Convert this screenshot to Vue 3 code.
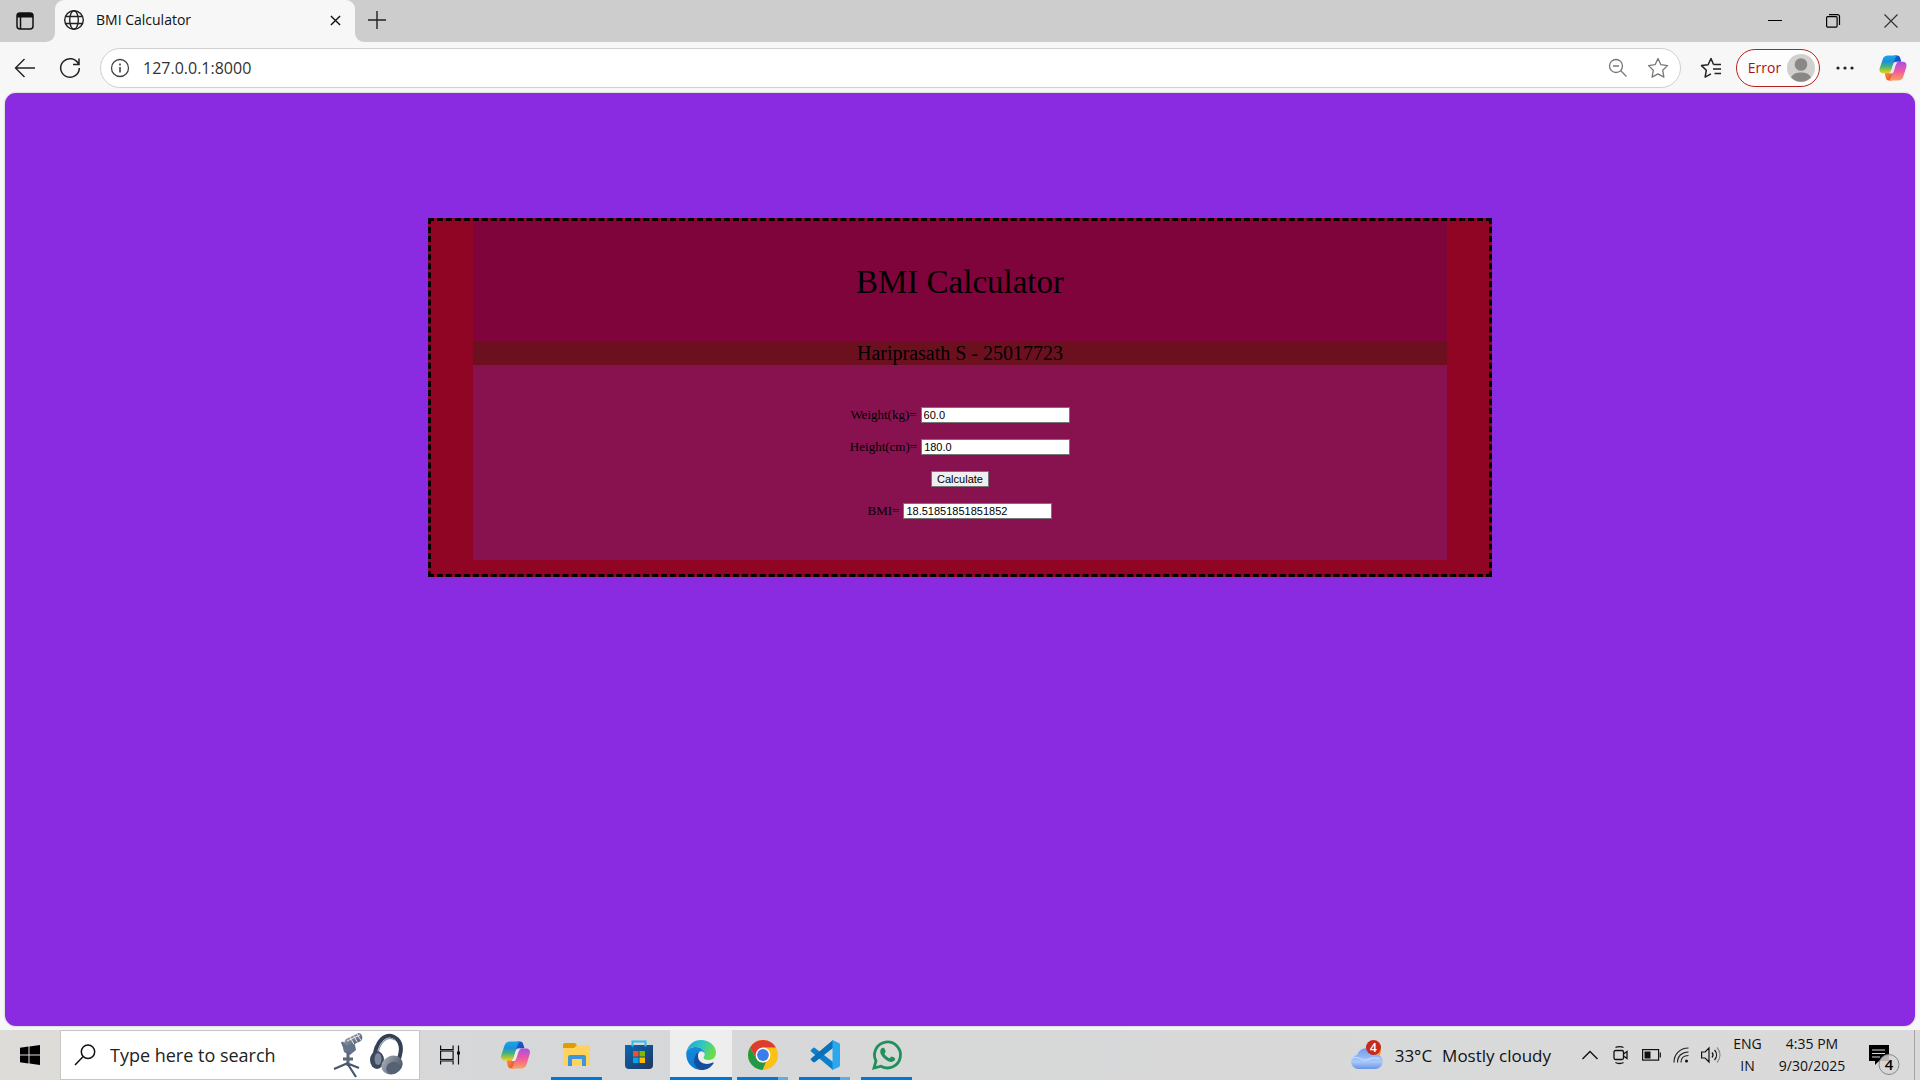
<script setup>
import { ref } from 'vue'

const address = ref('127.0.0.1:8000')
const weight = ref('60.0')
const height = ref('180.0')
const bmi = ref('18.51851851851852')

function calculate() {
  const metres = Number(height.value) / 100
  bmi.value = String(Number(weight.value) / (metres * metres))
}
</script>

<template>
  <div class="desktop">
    <svg class="defs" width="0" height="0" aria-hidden="true">
      <defs>
        <linearGradient id="cpA" x1="0" y1="0" x2="0" y2="1">
          <stop offset="0" stop-color="#19a5ea" /><stop offset=".35" stop-color="#1b8fdc" />
          <stop offset=".65" stop-color="#4bb86f" /><stop offset="1" stop-color="#f5cf15" />
        </linearGradient>
        <linearGradient id="cpB" x1="0" y1="0" x2="0" y2="1">
          <stop offset="0" stop-color="#a64fe6" /><stop offset=".5" stop-color="#ee5aa0" />
          <stop offset="1" stop-color="#fba05c" />
        </linearGradient>
        <linearGradient id="cpC" x1="0" y1="0" x2="1" y2="1">
          <stop offset="0" stop-color="#1a5fdc" /><stop offset="1" stop-color="#1646b8" />
        </linearGradient>
        <linearGradient id="cpD" x1="0" y1="0" x2="1" y2="1">
          <stop offset="0" stop-color="#f9a03c" /><stop offset="1" stop-color="#e8432e" />
        </linearGradient>
        <symbol id="copilot" viewBox="0 0 30 30">
          <path d="M16 1.500h3.500c2 0 2.800 1.300 3.300 3l1.100 3.700h-5.400c-2 0-3.200 1.200-3.800 3z" fill="url(#cpC)" />
          <path d="M14 28.500h-3.500c-2 0-2.800-1.300-3.300-3L6 20h5.500c2 0 3.200-1.200 3.800-3z" fill="url(#cpD)" />
          <path d="M9.500 1.500H20c-2 .7-2.600 2.500-3.200 4.500l-3.300 10.500c-.8 2.400-2 4-4.500 4H4.500c-3.200 0-4.700-2.400-3.700-5.600L4 5.500c.9-2.700 2.600-4 5.500-4z" fill="url(#cpA)" />
          <path d="M20.500 28.500H10c2-.7 2.600-2.500 3.200-4.500l3.300-11.500c.8-2.600 2-4.100 4.500-4.100h4.500c3.200 0 4.700 2.400 3.700 5.700L26 24.500c-.9 2.700-2.600 4-5.500 4z" fill="url(#cpB)" />
          <path d="M17.300 9.200h3.300c-1.800.5-2.500 2-3.200 4.200l-1.500 5c-.5 1.600-1.500 2.600-3.500 2.600H10c2-.5 2.900-2 3.500-4.300l1.500-5c.4-1.400 1-2.200 2.300-2.500z" fill="#eee9f1" />
        </symbol>
        <linearGradient id="edA" x1="0" y1="0" x2="1" y2=".4">
          <stop offset="0" stop-color="#229fe0" /><stop offset=".5" stop-color="#2cc5c5" /><stop offset="1" stop-color="#69dd4b" />
        </linearGradient>
        <linearGradient id="edB" x1="0" y1="0" x2="0" y2="1">
          <stop offset="0" stop-color="#168bd8" /><stop offset="1" stop-color="#0c77d2" />
        </linearGradient>
        <linearGradient id="store" x1="0" y1="0" x2="1" y2="1">
          <stop offset="0" stop-color="#0669b7" /><stop offset="1" stop-color="#22345c" />
        </linearGradient>
        <linearGradient id="cloud" x1="0" y1="0" x2="0" y2="1">
          <stop offset="0" stop-color="#6b9cf0" /><stop offset=".65" stop-color="#a9c9f8" /><stop offset="1" stop-color="#6794e8" />
        </linearGradient>
        <linearGradient id="metal" x1="0" y1="0" x2="1" y2="1">
          <stop offset="0" stop-color="#b2b8c3" /><stop offset="1" stop-color="#3b4759" />
        </linearGradient>
      </defs>
    </svg>

    <header class="tabstrip">
      <button class="tabactions" aria-label="Tab actions menu">
        <svg width="20" height="20" viewBox="0 0 20 20" fill="none" stroke="#111" stroke-width="1.500">
          <rect x="2" y="2" width="16" height="16" rx="3" /><path d="M2 5h16M2 3.500h16" stroke-width="3" /><path d="M5.500 6v12" />
        </svg>
      </button>
      <div class="tab">
        <svg width="22" height="22" viewBox="0 0 22 22" fill="none" stroke="#222" stroke-width="1.400">
          <circle cx="11" cy="11" r="9.300" /><ellipse cx="11" cy="11" rx="4.300" ry="9.300" /><path d="M2.500 7.500h17M2.500 14.500h17" />
        </svg>
        <span class="tabtitle">BMI Calculator</span>
        <button class="tabclose" aria-label="Close tab">
          <svg width="11" height="11" viewBox="0 0 12 12" stroke="#111" stroke-width="1.500"><path d="M1 1l10 10M11 1L1 11" /></svg>
        </button>
      </div>
      <button class="newtab" aria-label="New tab">
        <svg width="18" height="18" viewBox="0 0 18 18" stroke="#222" stroke-width="1.400"><path d="M9 0v18M0 9h18" /></svg>
      </button>
      <div class="winbuttons">
        <button aria-label="Minimize"><svg width="14" height="14" viewBox="0 0 14 14" stroke="#000"><path d="M0 6.500h14" /></svg></button>
        <button aria-label="Restore"><svg width="14" height="14" viewBox="0 0 14 14" fill="none" stroke="#000" stroke-width="1.200"><rect x=".6" y="2.600" width="10.500" height="10.500" rx="1" /><path d="M3 .6h8.500a2 2 0 0 1 2 2V11" /></svg></button>
        <button aria-label="Close"><svg width="14" height="14" viewBox="0 0 14 14" stroke="#333" stroke-width="1.200"><path d="M.5.5l13 13M13.500.5l-13 13" /></svg></button>
      </div>
    </header>

    <nav class="toolbar">
      <button class="navbtn" aria-label="Back">
        <svg width="22" height="20" viewBox="0 0 22 20" fill="none" stroke="#222" stroke-width="1.400"><path d="M10.500 1L1.500 10l9 9M1.500 10H21" /></svg>
      </button>
      <button class="navbtn" aria-label="Refresh">
        <svg width="22" height="22" viewBox="0 0 22 22" fill="none" stroke="#222" stroke-width="1.500"><path d="M19.500 7.200A9.300 9.300 0 1 0 20.300 11M20 1.500v6h-6" /></svg>
      </button>
      <div class="omnibox">
        <svg width="20" height="20" viewBox="0 0 20 20" fill="none" stroke="#444" stroke-width="1.300"><circle cx="10" cy="10" r="8.500" /><path d="M10 9v5.500M10 5.500v2" stroke-width="1.600" /></svg>
        <input v-model="address" class="address" aria-label="Address and search bar" />
        <button aria-label="Zoom"><svg width="20" height="20" viewBox="0 0 20 20" fill="none" stroke="#777" stroke-width="1.300"><circle cx="8" cy="8" r="6.500" /><path d="M5 8h6M12.800 12.800L18.500 18.500" /></svg></button>
        <button aria-label="Add to favorites"><svg width="22" height="22" viewBox="0 0 22 22" fill="none" stroke="#777" stroke-width="1.300" stroke-linejoin="round"><path d="M11 1.500l2.900 6.200 6.600.9-4.800 4.700 1.200 6.800L11 16.900l-5.900 3.200 1.200-6.800L1.500 8.600l6.600-.9z" /></svg></button>
      </div>
      <button class="favorites" aria-label="Favorites">
        <svg width="22" height="22" viewBox="0 0 22 22" fill="none" stroke="#222" stroke-width="1.500" stroke-linejoin="round"><path d="M13.500 7.500L11 1.500 8.100 7.700l-6.600.9 4.800 4.700-1.200 6.800L11 16.900M13.500 7.500H21M13 12h8M14.500 16.500H21" /></svg>
      </button>
      <button class="profile">
        Error
        <svg width="28" height="28" viewBox="0 0 28 28"><circle cx="14" cy="14" r="14" fill="#d2d0ce" /><circle cx="14" cy="10.500" r="6.300" fill="#8a8886" /><path d="M4 23.500c2-4 5.500-5 10-5s8 1 10 5a14 14 0 0 1-20 0z" fill="#8a8886" /></svg>
      </button>
      <button class="more" aria-label="Settings and more">
        <svg width="18" height="4" viewBox="0 0 18 4" fill="#222"><circle cx="2" cy="2" r="1.600" /><circle cx="9" cy="2" r="1.600" /><circle cx="16" cy="2" r="1.600" /></svg>
      </button>
      <button class="sidebar" aria-label="Copilot"><svg width="28" height="28"><use href="#copilot" /></svg></button>
    </nav>

    <main class="page">
      <div class="box">
        <h1>BMI Calculator</h1>
        <h2>Hariprasath S - 25017723</h2>
        <form @submit.prevent="calculate">
          <div class="row"><label for="weight">Weight(kg)=</label><input id="weight" v-model="weight" /></div>
          <div class="row"><label for="height">Height(cm)=</label><input id="height" v-model="height" /></div>
          <div class="row"><button type="submit">Calculate</button></div>
          <div class="row"><label for="bmi">BMI=</label><input id="bmi" v-model="bmi" readonly /></div>
        </form>
      </div>
    </main>

    <footer class="taskbar">
      <button class="start" aria-label="Start">
        <svg width="20" height="20" viewBox="0 0 20 20"><path d="M0 2.800l8.500-1.200V9.500H0zM9.500 1.500L20 0v9.500H9.500zM0 10.500h8.500v7.900L0 17.200zM9.500 10.500H20V20L9.500 18.500z" /></svg>
      </button>
      <label class="search">
        <svg width="22" height="22" viewBox="0 0 22 22" fill="none" stroke="#111" stroke-width="1.500"><circle cx="14" cy="7.700" r="6.700" /><path d="M9.200 12.500L1 21" /></svg>
        <input type="text" placeholder="Type here to search" aria-label="Type here to search" />
        <svg class="gear" width="70" height="46" viewBox="0 0 70 46">
          <path d="M10 12l3 7h6M13 18l-4-8" fill="none" stroke="#5d6878" stroke-width="2.500" />
          <path d="M9 11l12-3 2 10-6 5-6-3z" fill="#64748b" />
          <path d="M13 7L25 1.200c4-1 6 6 2.500 8L16 14.500c-4 .5-6-5-3-7.500z" fill="url(#metal)" />
          <path d="M17 5l4 7.500M20.500 3.500l4 7M24 2l4 6.500M14 9l13-6" stroke="#e5e8ec" fill="none" />
          <path d="M15 20v14M10 27h10" stroke="#5a6779" stroke-width="3" />
          <path d="M15 31L1 37M14 31l9 14M16 32l10 4" stroke="#46566c" stroke-width="2.200" />
          <path d="M41 29C42 8 54-2 64 7c6 6 4 14 1 23" fill="none" stroke="#344153" stroke-width="4" />
          <path d="M45 21C47 10 55 3 62 8" fill="none" stroke="#8b97a8" stroke-width="1.200" />
          <ellipse cx="44" cy="28" rx="7" ry="9" fill="#3c495c" /><ellipse cx="45" cy="27" rx="3.500" ry="6" fill="#7d899a" />
          <ellipse cx="59" cy="33" rx="11" ry="9" transform="rotate(-24 59 33)" fill="url(#metal)" />
          <ellipse cx="60" cy="36" rx="7" ry="6" transform="rotate(-24 60 36)" fill="#566174" />
        </svg>
      </label>
      <div class="apps">
        <button class="app" aria-label="Task View">
          <svg width="20" height="20" viewBox="0 0 20 20" fill="none" stroke="#111" stroke-width="1.200"><path d="M.6.500v4h12.500v-4M.6 19.500v-3.500h12.500v3.500M18.500.5v19" /><rect x=".6" y="6" width="12.500" height="8.500" /><path d="M17 6.500h3v3h-3z" fill="#111" stroke="none" /></svg>
        </button>
        <button class="app" aria-label="Copilot"><svg width="31" height="30"><use href="#copilot" /></svg></button>
        <button class="app open" aria-label="File Explorer">
          <svg width="28" height="26" viewBox="0 0 28 26"><path d="M0 3a2 2 0 0 1 2-2h10l2 2-2 5H0z" fill="#e09c05" /><path d="M0 6h11l3-3h12a1 1 0 0 1 1 1v18a1 1 0 0 1-1 1H1a1 1 0 0 1-1-1z" fill="#ffd25d" /><path d="M5 24V15a2 2 0 0 1 2-2h14a2 2 0 0 1 2 2v9h-4v-7H9v7z" fill="#3c96db" /></svg>
        </button>
        <button class="app" aria-label="Microsoft Store">
          <svg width="30" height="30" viewBox="0 0 30 30"><path d="M8.500 6V1.500h13V6" fill="none" stroke="#28c0ef" stroke-width="2" /><path d="M1 5h28v20a4 4 0 0 1-4 4H5a4 4 0 0 1-4-4z" fill="url(#store)" /><path d="M8.500 5v1.500M21.500 5v1.500" stroke="#28c0ef" stroke-width="2" /><path d="M9 11h5.500v5.500H9z" fill="#f25022" /><path d="M15.500 11H21v5.500h-5.500z" fill="#7fba00" /><path d="M9 17.500h5.500V23H9z" fill="#00a4ef" /><path d="M15.500 17.500H21V23h-5.500z" fill="#ffb900" /></svg>
        </button>
        <button class="app active" aria-label="Microsoft Edge">
          <svg width="30" height="30" viewBox="0 0 30 30"><path d="M.5 12C2 4.500 8 0 15 0c8.500 0 15 6 15 12.500 0 5-3.700 7.500-7.500 7.500-3.500 0-5-1.300-5-2.200 0-.8 1.200-1.300 1.200-3.800C18.700 10 14.500 7 10 7 5.500 7 2 9 .5 12z" fill="url(#edA)" /><path d="M.3 12C2 8.500 6 7 10 7c5 0 8.700 3.500 8.700 6.500-1-2-3-2.500-4.500-2C9 13 9 27 19 29.400 9.500 32-1 24.500.3 12z" fill="url(#edB)" /><path d="M13.300 12C8 13 4.500 26.500 15 29.900c5.500.3 10-2.400 12.500-6.400.5-.8-.1-1.300-.8-.9-6 3-14.700.8-14.700-6.600 0-1.600.4-3 1.300-4z" fill="#14509e" /></svg>
        </button>
        <button class="app open multi" aria-label="Google Chrome">
          <svg width="30" height="30" viewBox="0 0 30 30"><circle cx="15" cy="15" r="15" fill="#fbc116" /><path d="M2 7.500A15 15 0 0 1 28 7.500H15L8.500 18.700z" fill="#df3c30" /><path d="M2 7.500l6.500 11.200c2 3.500 6 4.800 9.500 3.300L14.500 30A15 15 0 0 1 2 7.500z" fill="#219a48" /><circle cx="15" cy="15" r="7.400" fill="#fff" /><circle cx="15" cy="15" r="5.900" fill="#397ee9" /></svg>
        </button>
        <button class="app open multi" aria-label="Visual Studio Code">
          <svg width="30" height="30" viewBox="0 0 30 30"><path d="M1 10l2-2a1.500 1.500 0 0 1 2 0l18 14v8L1 11.500A1 1 0 0 1 1 10z" fill="#0d80cc" /><path d="M1 20l2 2a1.500 1.500 0 0 0 2 0l18-14V0L1 18.500A1 1 0 0 0 1 20z" fill="#0871b8" /><path d="M22.500 0L29 3a2 2 0 0 1 1 1.800v20.400a2 2 0 0 1-1 1.800l-6.500 3z" fill="#29a8f0" /></svg>
        </button>
        <button class="app open" aria-label="WhatsApp">
          <svg width="30" height="30" viewBox="0 0 30 30"><path d="M2 28l2-7A13 13 0 1 1 9 26.200z" fill="none" stroke="#21905a" stroke-width="2.800" /><path d="M10 8c1-.6 2.200-.3 2.600.8l1 2.500c.3.800-1.200 2-1.100 2.500 1 2 2.500 3.500 4.700 4.400.8.200 1.800-2 2.700-1.700l2.600 1.300c1.100.6.7 2.100-.2 3-1.700 1.600-4 1.500-7-.1-3-1.700-5.200-4-6.500-6.600C7.600 11.500 8.300 9 10 8z" fill="#21905a" /></svg>
        </button>
      </div>
      <button class="weather">
        <svg width="32" height="32" viewBox="0 0 32 32"><circle cx="22" cy="12" r="8" fill="#f59a24" /><path d="M7 30a7 7 0 0 1-1-13.900A10 10 0 0 1 24.500 15 7.500 7.500 0 0 1 24 30z" fill="url(#cloud)" /><path d="M1 19c7-3 9 3 14 2s7-4 14-1" fill="none" stroke="#c4d9fa" stroke-width="1.200" /><circle cx="22.500" cy="8.500" r="7.500" fill="#c42b1c" /><text x="22.500" y="13" text-anchor="middle" class="badgetext" fill="#fff">4</text></svg>
        <span>33°C</span><span>Mostly cloudy</span>
      </button>
      <div class="tray">
        <button class="chevron" aria-label="Show hidden icons"><svg width="16" height="10" viewBox="0 0 16 10" fill="none" stroke="#111" stroke-width="1.400"><path d="M.5 9L8 1.500 15.500 9" /></svg></button>
        <button aria-label="Meet Now"><svg width="16" height="20" viewBox="0 0 16 20" fill="none" stroke="#111" stroke-width="1.300"><rect x="1" y="5.500" width="9.500" height="9" rx="1.500" /><path d="M10.500 9l3.500-2.500v7L10.500 11M2.500 2.500c2-1.300 6-1.300 8 0M2.500 17.500c2 1.300 6 1.300 8 0" /></svg></button>
        <button aria-label="Battery"><svg width="19" height="12" viewBox="0 0 19 12" fill="none" stroke="#111" stroke-width="1.200"><rect x=".6" y=".6" width="16" height="10.500" /><path d="M2.500 2.500h6v7h-6z" fill="#111" stroke="none" /><path d="M18.300 3.500v5" /></svg></button>
        <button aria-label="Wi-Fi"><svg width="16" height="16" viewBox="0 0 16 16" fill="none" stroke="#222" stroke-width="1.200"><path d="M1 15.500C1 7 7 1 15.500 1M4.500 15.500C4.500 9 9 5 15.500 5M8 15.500C8 11 11 8.500 15.500 8.500" /><circle cx="13.500" cy="14" r="1.500" fill="#111" stroke="none" /></svg></button>
        <button aria-label="Volume"><svg width="20" height="18" viewBox="0 0 20 18" fill="none" stroke="#111" stroke-width="1.200"><path d="M.6 6h3.500L8 2v14l-3.900-4H.6zM11 6.500c1.300 1.500 1.300 3.500 0 5M13.500 4c2.700 3 2.700 7 0 10" /><path d="M16 1.500c4 4.500 4 10.500 0 15" stroke="#888" /></svg></button>
        <button class="lang"><span>ENG</span><span>IN</span></button>
        <button class="clock"><span>4:35 PM</span><span>9/30/2025</span></button>
        <button class="notify" aria-label="Notifications">
          <svg width="32" height="32" viewBox="0 0 32 32"><path d="M1 1h20v16H11l-4 4v-4H1z" /><path d="M4 6h13M4 9.500h13M4 13h8" stroke="#dadada" stroke-width="1.200" /><circle cx="21" cy="20.500" r="10" fill="#d5d5d5" fill-opacity=".85" stroke="#888" /><text x="21" y="26" text-anchor="middle" class="notetext">4</text></svg>
        </button>
        <button class="showdesktop" aria-label="Show desktop"></button>
      </div>
    </footer>
  </div>
</template>

<style>
body { margin: 0; }
</style>

<style scoped>
* { box-sizing: border-box; }
.defs { position: absolute; }
svg { display: block; flex-shrink: 0; overflow: visible; }
button { border: 0; padding: 0; margin: 0; background: none; color: inherit; font: inherit; display: flex; align-items: center; justify-content: center; flex-shrink: 0; }
.desktop { min-height: 100vh; display: flex; flex-direction: column; background: #f7f7f7; font-family: "Open Sans", "Noto Sans", sans-serif; color: #111; }

.tabstrip { display: flex; height: 42px; background: linear-gradient(90deg, #f7f7f7 400px, #cdcdcd 400px); }
.tabactions { width: 55px; padding-right: 5px; border-bottom-right-radius: 9px; background: #cdcdcd; }
.tab { width: 300px; display: flex; align-items: center; padding: 0 14px 2px 8px; background: #f7f7f7; border-radius: 9px 9px 0 0; box-shadow: 0 -9px 0 9px #cdcdcd; clip-path: inset(0); }
.tabtitle { flex: 1; margin-left: 11px; font-size: 14px; line-height: 20px; }
.newtab { width: 44px; padding-bottom: 3px; background: #cdcdcd; border-bottom-left-radius: 9px; }
.winbuttons { flex: 1; display: flex; justify-content: flex-end; background: #cdcdcd; }
.winbuttons button { width: 58px; }

.toolbar { display: flex; align-items: center; height: 51px; padding: 0 3px 0 2px; }
.navbtn { width: 45px; }
.omnibox { flex: 1; display: flex; align-items: center; height: 40px; margin-left: 8px; padding: 0 10px 0 9px; border: 1px solid #cfcfcf; border-radius: 20px; background: #fff; }
.omnibox button { width: 40px; }
.omnibox button:last-child { width: 24px; margin-left: 8px; }
.address { flex: 1; min-width: 0; padding: 0; margin-left: 13px; border: 0; outline: 0; font: 16px/24px "Open Sans", "Noto Sans", sans-serif; color: #333; background: none; }
.favorites { width: 55px; padding-left: 5px; }
.profile { width: 84px; height: 38px; gap: 6px; padding-left: 7px; border: 1px solid #b8211d; border-radius: 19px; background: #fdfdfd; color: #b01010; font-size: 14px; }
.more { width: 49px; }
.sidebar { width: 48px; }

.page { flex: 1; margin: 0 5px 4px; padding-top: 125px; background: #8a2be2; border-radius: 11px; box-shadow: 0 0 2px #aaa; font-family: "Liberation Serif", "Times New Roman", serif; color: #000; }
.box { width: 100%; max-width: 1064px; margin: 0 auto; padding: 0 42px 14px; border: 3px dashed #000; background: #900424; text-align: center; }
h1, h2 { margin: 0; font-weight: 400; }
h1 { padding: 43px 0 41px; font-size: 33px; line-height: 37px; background: #80043c; }
h2 { font-size: 20px; line-height: 23px; background: #6c1020; }
form { display: flex; flex-direction: column; gap: 16px; padding: 42px 0 41px; background: #881250; }
.row { display: flex; justify-content: center; align-items: center; gap: 4px; height: 16px; font-size: 13px; line-height: 16px; }
.row input { width: 149px; height: 16px; padding: 0 2px; border: 1px solid #767676; background: #fff; color: #000; font: 11px/14px "Liberation Sans", Arial, sans-serif; }
.row button { width: 58px; height: 16px; border: 1px solid #767676; background: #efefef; color: #000; font: 11px/14px "Liberation Sans", Arial, sans-serif; }

.taskbar { display: flex; height: 50px; background: linear-gradient(90deg, #dedcd8, #d6d7d8 25%, #dadada); }
.start { width: 60px; }
.search { flex: 0 1 360px; min-width: 0; overflow: hidden; display: flex; align-items: center; padding: 0 16px 0 13px; border: 1px solid #c6c6c6; background: #fff; }
.search input { flex: 1 1 0; width: 0; min-width: 0; padding: 0; margin-left: 14px; border: 0; outline: 0; background: none; font: 18px/24px "Open Sans", "Noto Sans", sans-serif; }
.search input::placeholder { color: #222; opacity: 1; }
.apps { display: flex; }
.app { width: 62px; height: 50px; position: relative; }
.app:first-child { width: 64px; padding-right: 4px; }
.active { background: #eee; }
.active::after, .open::after { content: ""; position: absolute; bottom: 0; left: 5px; right: 6px; height: 3px; background: #0078d7; }
.active::after { left: 0; right: 0; }
.multi::after { background: linear-gradient(90deg, #0078d7 41px, #64abe2 41px); }
.weather { margin-left: auto; padding-right: 23px; gap: 10px; font-size: 17px; }
.weather svg { margin-right: 2px; }
.badgetext { font: 600 12px "Open Sans", sans-serif; }
.tray { display: flex; }
.tray button { width: 30px; }
.tray .chevron { width: 32px; }
.tray .lang, .tray .clock { flex-direction: column; justify-content: flex-start; padding-top: 3px; font-size: 14px; line-height: 22px; }
.tray .lang { width: 43px; }
.tray .clock { width: 86px; }
.tray .notify { width: 59px; padding: 10px 1px 0 0; }
.notetext { font: 600 15px "Open Sans", sans-serif; }
.tray .showdesktop { width: 6px; border-left: 1px solid #a5a5a5; }
</style>
